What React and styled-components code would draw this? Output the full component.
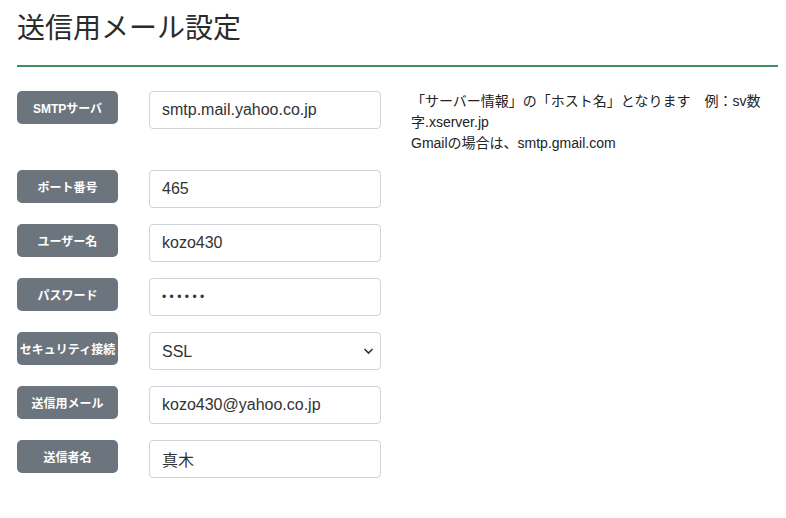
import React from 'react';
import styled, { createGlobalStyle } from 'styled-components';

const GlobalStyle = createGlobalStyle`
  body {
    margin: 0;
    background: #ffffff;
    font-family: "Liberation Sans", "Noto Sans CJK JP", sans-serif;
    color: #212529;
  }
`;

// Page
const Page = styled.div`
  padding: 12px 8px 24px 17px;
`;

const Title = styled.h3`
  margin: 0;
  font-size: 28px;
  font-weight: 400;
  line-height: 34px;
  color: #2b2b2b;
  padding-bottom: 19px;
  border-bottom: 2px solid #3d9066;
`;

const Form = styled.div`
  display: flex;
  flex-direction: column;
  gap: 16px;
  padding-top: 24px;
`;

const Row = styled.div`
  display: grid;
  grid-template-columns: 101px 232px 356px;
  column-gap: 31px;
  align-items: start;
`;

const Label = styled.div`
  height: 33px;
  display: flex;
  align-items: center;
  justify-content: center;
  background: #6c757d;
  color: #ffffff;
  border-radius: 5px;
  font-size: 12px;
  font-weight: 700;
  white-space: nowrap;
`;

const Input = styled.input`
  box-sizing: border-box;
  width: 100%;
  height: 38px;
  padding: 6px 12px;
  border: 1px solid #ced4da;
  border-radius: 4px;
  font-family: "Liberation Sans", "Noto Sans CJK JP", sans-serif;
  font-size: ${(p) => (p.type === 'password' ? '12px' : '16px')};
  color: #333333;
  background: #ffffff;
  outline: none;
  letter-spacing: ${(p) => (p.type === 'password' ? '3.4px' : 'normal')};
`;

const SelectWrap = styled.div`
  position: relative;
`;

const Select = styled.select`
  box-sizing: border-box;
  width: 100%;
  height: 38px;
  padding: 6px 12px;
  border: 1px solid #ced4da;
  border-radius: 4px;
  font-family: "Liberation Sans", sans-serif;
  font-size: 16px;
  color: #333333;
  background: #ffffff;
  appearance: none;
  outline: none;
`;

const Chevron = styled.svg`
  position: absolute;
  right: 7px;
  top: 15px;
  pointer-events: none;
`;

const Help = styled.div`
  font-size: 14px;
  line-height: 21px;
  color: #222222;
  margin-left: -1px;
`;

const fields = [
  { label: 'SMTPサーバ', value: 'smtp.mail.yahoo.co.jp' },
  { label: 'ポート番号', value: '465' },
  { label: 'ユーザー名', value: 'kozo430' },
  { label: 'パスワード', value: 'kozo43', type: 'password' },
  { label: 'セキュリティ接続', select: ['SSL', 'TLS', 'なし'] },
  { label: '送信用メール', value: 'kozo430@yahoo.co.jp' },
  { label: '送信者名', value: '真木' },
];

function App() {
  return (
    <Page>
      <GlobalStyle />
      <Title>送信用メール設定</Title>
      <Form>
        {fields.map((f, i) => (
          <Row key={f.label}>
            <Label>{f.label}</Label>
            {f.select ? (
              <SelectWrap>
                <Select defaultValue={f.select[0]}>
                  {f.select.map((o) => (
                    <option key={o}>{o}</option>
                  ))}
                </Select>
                <Chevron width="11" height="8" viewBox="0 0 11 8">
                  <path d="M1.5 2l4 4 4-4" fill="none" stroke="#333" strokeWidth="1.6" />
                </Chevron>
              </SelectWrap>
            ) : (
              <Input type={f.type || 'text'} defaultValue={f.value} readOnly />
            )}
            {i === 0 && (
              <Help>
                「サーバー情報」の「ホスト名」となります　例：sv数字.xserver.jp
                <br />
                Gmailの場合は、smtp.gmail.com
              </Help>
            )}
          </Row>
        ))}
      </Form>
    </Page>
  );
}

export default App;
